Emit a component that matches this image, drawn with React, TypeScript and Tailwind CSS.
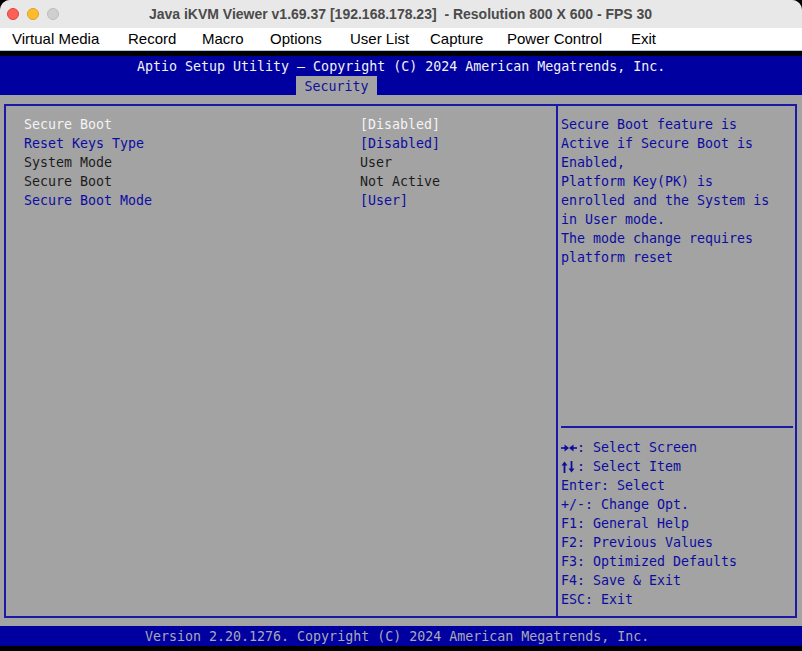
import React from 'react'

const menus = [
  { name: 'Virtual Media', w: 'w-[116px]' },
  { name: 'Record', w: 'w-[74px]' },
  { name: 'Macro', w: 'w-[68px]' },
  { name: 'Options', w: 'w-[80px]' },
  { name: 'User List', w: 'w-[80px]' },
  { name: 'Capture', w: 'w-[77px]' },
  { name: 'Power Control', w: 'w-[124px]' },
  { name: 'Exit', w: 'w-[60px]' },
]

// settings rows: label, value, style
const rows = [
  { label: 'Secure Boot', value: '[Disabled]', tone: 'text-[#f4f4f4]' },
  { label: 'Reset Keys Type', value: '[Disabled]', tone: 'text-[#0c0ca0]' },
  { label: 'System Mode', value: 'User', tone: 'text-[#1c1c1c]' },
  { label: 'Secure Boot', value: 'Not Active', tone: 'text-[#1c1c1c]' },
  { label: 'Secure Boot Mode', value: '[User]', tone: 'text-[#0c0ca0]' },
]

const helpLines = [
  'Secure Boot feature is',
  'Active if Secure Boot is',
  'Enabled,',
  'Platform Key(PK) is',
  'enrolled and the System is',
  'in User mode.',
  'The mode change requires',
  'platform reset',
]

function LeftRight() {
  return (
    <svg width="16" height="12" viewBox="0 0 16 12" className="shrink-0">
      <line x1="0" y1="6" x2="5" y2="6" stroke="#0c0ca0" strokeWidth="1.6" />
      <polygon points="3.5,2.5 8,6 3.5,9.5" fill="#0c0ca0" />
      <polygon points="12.5,2.5 8,6 12.5,9.5" fill="#0c0ca0" />
      <line x1="11" y1="6" x2="16" y2="6" stroke="#0c0ca0" strokeWidth="1.6" />
    </svg>
  )
}

function UpDown() {
  return (
    <svg width="16" height="12" viewBox="0 0 16 12" className="shrink-0">
      <line x1="3.5" y1="3" x2="3.5" y2="12" stroke="#0c0ca0" strokeWidth="1.8" />
      <polygon points="0.5,4.5 3.5,0.5 6.5,4.5" fill="#0c0ca0" />
      <line x1="10.5" y1="0" x2="10.5" y2="9" stroke="#0c0ca0" strokeWidth="1.8" />
      <polygon points="7.5,7.5 10.5,11.5 13.5,7.5" fill="#0c0ca0" />
    </svg>
  )
}

const keyLines: [React.ReactNode, string][] = [
  [<LeftRight />, ': Select Screen'],
  [<UpDown />, ': Select Item'],
  [null, 'Enter: Select'],
  [null, '+/-: Change Opt.'],
  [null, 'F1: General Help'],
  [null, 'F2: Previous Values'],
  [null, 'F3: Optimized Defaults'],
  [null, 'F4: Save & Exit'],
  [null, 'ESC: Exit'],
]

const mono = "font-['DejaVu_Sans_Mono','Liberation_Mono',monospace] text-[13.3px] leading-[19px] whitespace-pre"

export default function App() {
  return (
    <div className="w-[802px] h-[651px] bg-black overflow-hidden">
      <div className="w-[802px] h-[651px] rounded-t-[10px] overflow-hidden flex flex-col bg-[#a3a3a3]">
        {/* title bar */}
        <div className="h-[28px] bg-[#e8e8e8] flex items-center relative">
          <div className="flex items-center gap-[8px] pl-[7px]">
            <span className="w-[12px] h-[12px] rounded-full bg-[#fe5f57] border border-[#e0443e]" />
            <span className="w-[12px] h-[12px] rounded-full bg-[#febc2e] border border-[#dea123]" />
            <span className="w-[12px] h-[12px] rounded-full bg-[#cfcfcf] border border-[#bcbcbc]" />
          </div>
          <div className="flex-1 flex justify-center pr-[60px] font-['Liberation_Sans',Arial,sans-serif] font-bold text-[14px] text-[#4b4b4b] whitespace-pre">
            Java iKVM Viewer v1.69.37 [192.168.178.23]  - Resolution 800 X 600 - FPS 30
          </div>
        </div>

        {/* menu bar */}
        <div className="h-[23px] bg-white border-b border-[#a9c3e2] flex items-center pl-[12px] font-['Liberation_Sans',Arial,sans-serif] text-[15px] text-black">
          {menus.map((m) => (
            <div key={m.name} className={`${m.w} shrink-0 leading-[22px]`}>{m.name}</div>
          ))}
        </div>

        {/* BIOS screen 800x600 */}
        <div className="h-[5px] bg-black" />
        <div className="h-[39px] bg-[#0000a0] flex flex-col">
          <div className={`${mono} h-[20px] !leading-[22px] pl-[137px] text-[#f2f2f2] overflow-visible`}>
            Aptio Setup Utility – Copyright (C) 2024 American Megatrends, Inc.
          </div>
          <div className="h-[19px] flex">
            <div className={`${mono} !leading-[21px] h-[19px] overflow-hidden ml-[296px] w-[81px] bg-[#a3a3a3] text-[#10109a] text-center`}>Security</div>
          </div>
        </div>

        <div className="h-[531px] bg-[#a3a3a3] pt-[9px] pl-[4px]">
          <div className="w-[793px] h-[514px] border-2 border-[#1a1aa6] flex">
            {/* left pane */}
            <div className="w-[550px] h-full pt-[9px] pl-[18px]">
              {rows.map((r, i) => (
                <div key={i} className={`${mono} ${r.tone} grid grid-cols-[336px_auto]`}>
                  <span>{r.label}</span>
                  <span>{r.value}</span>
                </div>
              ))}
            </div>
            <div className="w-[2px] h-full bg-[#1a1aa6]" />
            {/* right pane */}
            <div className="flex-1 h-full flex flex-col justify-between pt-[9px] pb-[7px]">
              <div className="pl-[3px] text-[#0c0ca0]">
                {helpLines.map((l, i) => (
                  <div key={i} className={mono}>{l}</div>
                ))}
              </div>
              <div>
                <div className="h-[2px] ml-[3px] mr-[2px] bg-[#1a1aa6] mb-[10px]" />
                <div className="pl-[3px] text-[#0c0ca0]">
                  {keyLines.map(([icon, t], i) => (
                    <div key={i} className={`${mono} flex items-center`}>
                      {icon}
                      <span>{t}</span>
                    </div>
                  ))}
                </div>
              </div>
            </div>
          </div>
        </div>

        <div className={`h-[20px] bg-[#0000a0] ${mono} !leading-[21px] pl-[145px] text-[#a9a9b4]`}>
          Version 2.20.1276. Copyright (C) 2024 American Megatrends, Inc.
        </div>
        <div className="h-[5px] bg-black" />
      </div>
    </div>
  )
}
